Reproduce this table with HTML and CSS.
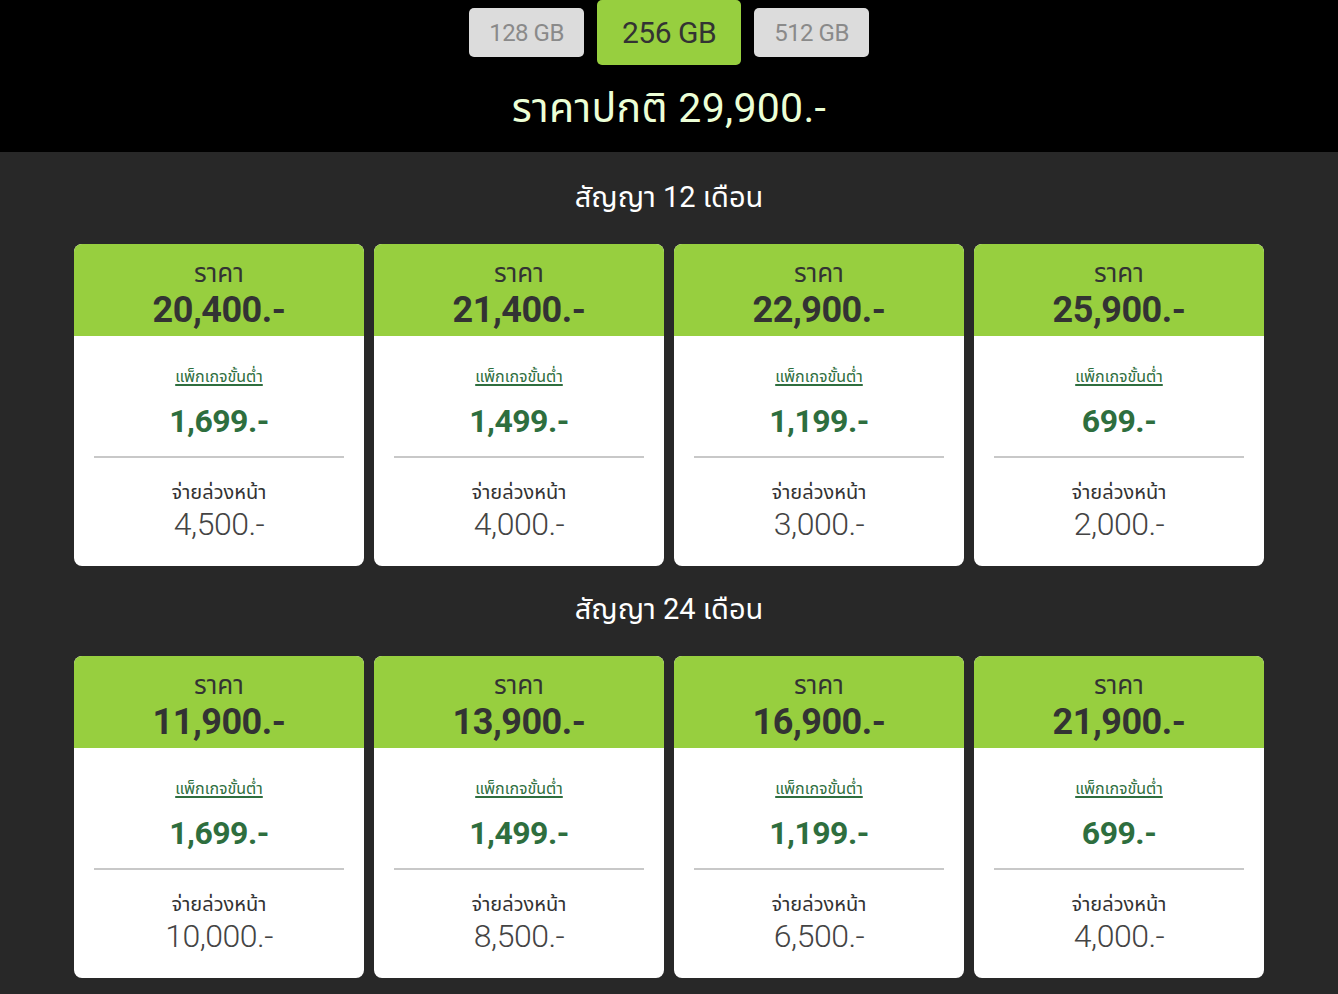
FILE: index.html
```html
<!DOCTYPE html>
<html lang="th">
<head>
<meta charset="utf-8">
<link rel="stylesheet" href="styles.css">
</head>
<body>
<header class="top">
  <nav class="tabs">
    <span class="tab">128 GB</span>
    <span class="tab tab-active">256 GB</span>
    <span class="tab">512 GB</span>
  </nav>
  <h1 class="normal-price">ราคาปกติ 29,900.-</h1>
</header>
<main class="plans">
  <h2 class="contract">สัญญา 12 เดือน</h2>
  <div class="cards">
    <div class="card"><div class="card-head"><div class="lbl">ราคา</div><div class="price">20,400.-</div></div><div class="card-body"><a class="pkg" href="#">แพ็กเกจขั้นต่ำ</a><div class="pkg-price">1,699.-</div><hr class="divider"><div class="adv-lbl">จ่ายล่วงหน้า</div><div class="adv">4,500.-</div></div></div>
    <div class="card"><div class="card-head"><div class="lbl">ราคา</div><div class="price">21,400.-</div></div><div class="card-body"><a class="pkg" href="#">แพ็กเกจขั้นต่ำ</a><div class="pkg-price">1,499.-</div><hr class="divider"><div class="adv-lbl">จ่ายล่วงหน้า</div><div class="adv">4,000.-</div></div></div>
    <div class="card"><div class="card-head"><div class="lbl">ราคา</div><div class="price">22,900.-</div></div><div class="card-body"><a class="pkg" href="#">แพ็กเกจขั้นต่ำ</a><div class="pkg-price">1,199.-</div><hr class="divider"><div class="adv-lbl">จ่ายล่วงหน้า</div><div class="adv">3,000.-</div></div></div>
    <div class="card"><div class="card-head"><div class="lbl">ราคา</div><div class="price">25,900.-</div></div><div class="card-body"><a class="pkg" href="#">แพ็กเกจขั้นต่ำ</a><div class="pkg-price">699.-</div><hr class="divider"><div class="adv-lbl">จ่ายล่วงหน้า</div><div class="adv">2,000.-</div></div></div>
  </div>
  <h2 class="contract">สัญญา 24 เดือน</h2>
  <div class="cards">
    <div class="card"><div class="card-head"><div class="lbl">ราคา</div><div class="price">11,900.-</div></div><div class="card-body"><a class="pkg" href="#">แพ็กเกจขั้นต่ำ</a><div class="pkg-price">1,699.-</div><hr class="divider"><div class="adv-lbl">จ่ายล่วงหน้า</div><div class="adv">10,000.-</div></div></div>
    <div class="card"><div class="card-head"><div class="lbl">ราคา</div><div class="price">13,900.-</div></div><div class="card-body"><a class="pkg" href="#">แพ็กเกจขั้นต่ำ</a><div class="pkg-price">1,499.-</div><hr class="divider"><div class="adv-lbl">จ่ายล่วงหน้า</div><div class="adv">8,500.-</div></div></div>
    <div class="card"><div class="card-head"><div class="lbl">ราคา</div><div class="price">16,900.-</div></div><div class="card-body"><a class="pkg" href="#">แพ็กเกจขั้นต่ำ</a><div class="pkg-price">1,199.-</div><hr class="divider"><div class="adv-lbl">จ่ายล่วงหน้า</div><div class="adv">6,500.-</div></div></div>
    <div class="card"><div class="card-head"><div class="lbl">ราคา</div><div class="price">21,900.-</div></div><div class="card-body"><a class="pkg" href="#">แพ็กเกจขั้นต่ำ</a><div class="pkg-price">699.-</div><hr class="divider"><div class="adv-lbl">จ่ายล่วงหน้า</div><div class="adv">4,000.-</div></div></div>
  </div>
</main>
</body>
</html>
```
FILE: styles.css
```css
* { box-sizing: border-box; }
html, body { margin: 0; padding: 0; }
body {
  background: #282828;
  font-family: "Roboto", "Noto Sans", "Noto Sans Thai", "Liberation Sans", sans-serif;
  color: #333;
}
.top {
  background: #000;
  height: 152px;
  display: flex;
  flex-direction: column;
  align-items: center;
}
.tabs {
  display: flex;
  gap: 13px;
  align-items: flex-start;
}
.tab {
  margin-top: 8px;
  width: 115px;
  height: 49px;
  border-radius: 5px;
  background: #dcdcdc;
  color: #8a8a8a;
  font-size: 24px;
  display: flex;
  align-items: center;
  justify-content: center;
  letter-spacing: -0.5px;
}
.tab-active {
  margin-top: 0;
  width: 144px;
  height: 65px;
  background: #97cf3f;
  color: #333;
  font-size: 30px;
}
.normal-price {
  margin: 19px 0 0;
  font-size: 41px;
  font-weight: 400;
  color: #ecffd6;
  line-height: 48px;
  letter-spacing: 0.3px;
}
.plans {
  padding: 22px 74px 16px;
}
.contract {
  margin: 0;
  text-align: center;
  color: #fff;
  font-size: 29px;
  font-weight: 400;
  line-height: 46px;
  height: 70px;
}
.cards {
  display: grid;
  grid-template-columns: repeat(4, 1fr);
  gap: 10px;
  margin-bottom: 20px;
}
.card {
  background: #fff;
  border-radius: 8px;
  overflow: hidden;
  height: 322px;
  text-align: center;
}
.card-head {
  background: #97cf3f;
  height: 92px;
  padding-top: 15px;
}
.lbl {
  font-size: 26px;
  line-height: 28px;
  color: #333;
}
.price {
  margin-top: 3px;
  font-size: 36px;
  line-height: 40px;
  font-weight: 700;
  color: #333;
  letter-spacing: -0.5px;
}
.card-body {
  padding: 29px 20px 0;
  display: flex;
  flex-direction: column;
  align-items: center;
}
.pkg {
  font-size: 16px;
  line-height: 24px;
  color: #2e6e3e;
  text-decoration: underline;
  text-underline-offset: 2px;
  text-decoration-thickness: 1.5px;
}
.pkg-price {
  margin-top: 12px;
  font-size: 32px;
  line-height: 40px;
  font-weight: 700;
  color: #2e6e3e;
  letter-spacing: -0.5px;
}
.divider {
  width: 100%;
  border: 0;
  border-top: 2px solid #c8c8c8;
  margin: 15px 0 0;
}
.adv-lbl {
  margin-top: 21px;
  font-size: 20px;
  line-height: 26px;
  color: #333;
}
.adv {
  font-size: 32px;
  line-height: 38px;
  font-weight: 300;
  color: #444;
  letter-spacing: -0.5px;
}
```
